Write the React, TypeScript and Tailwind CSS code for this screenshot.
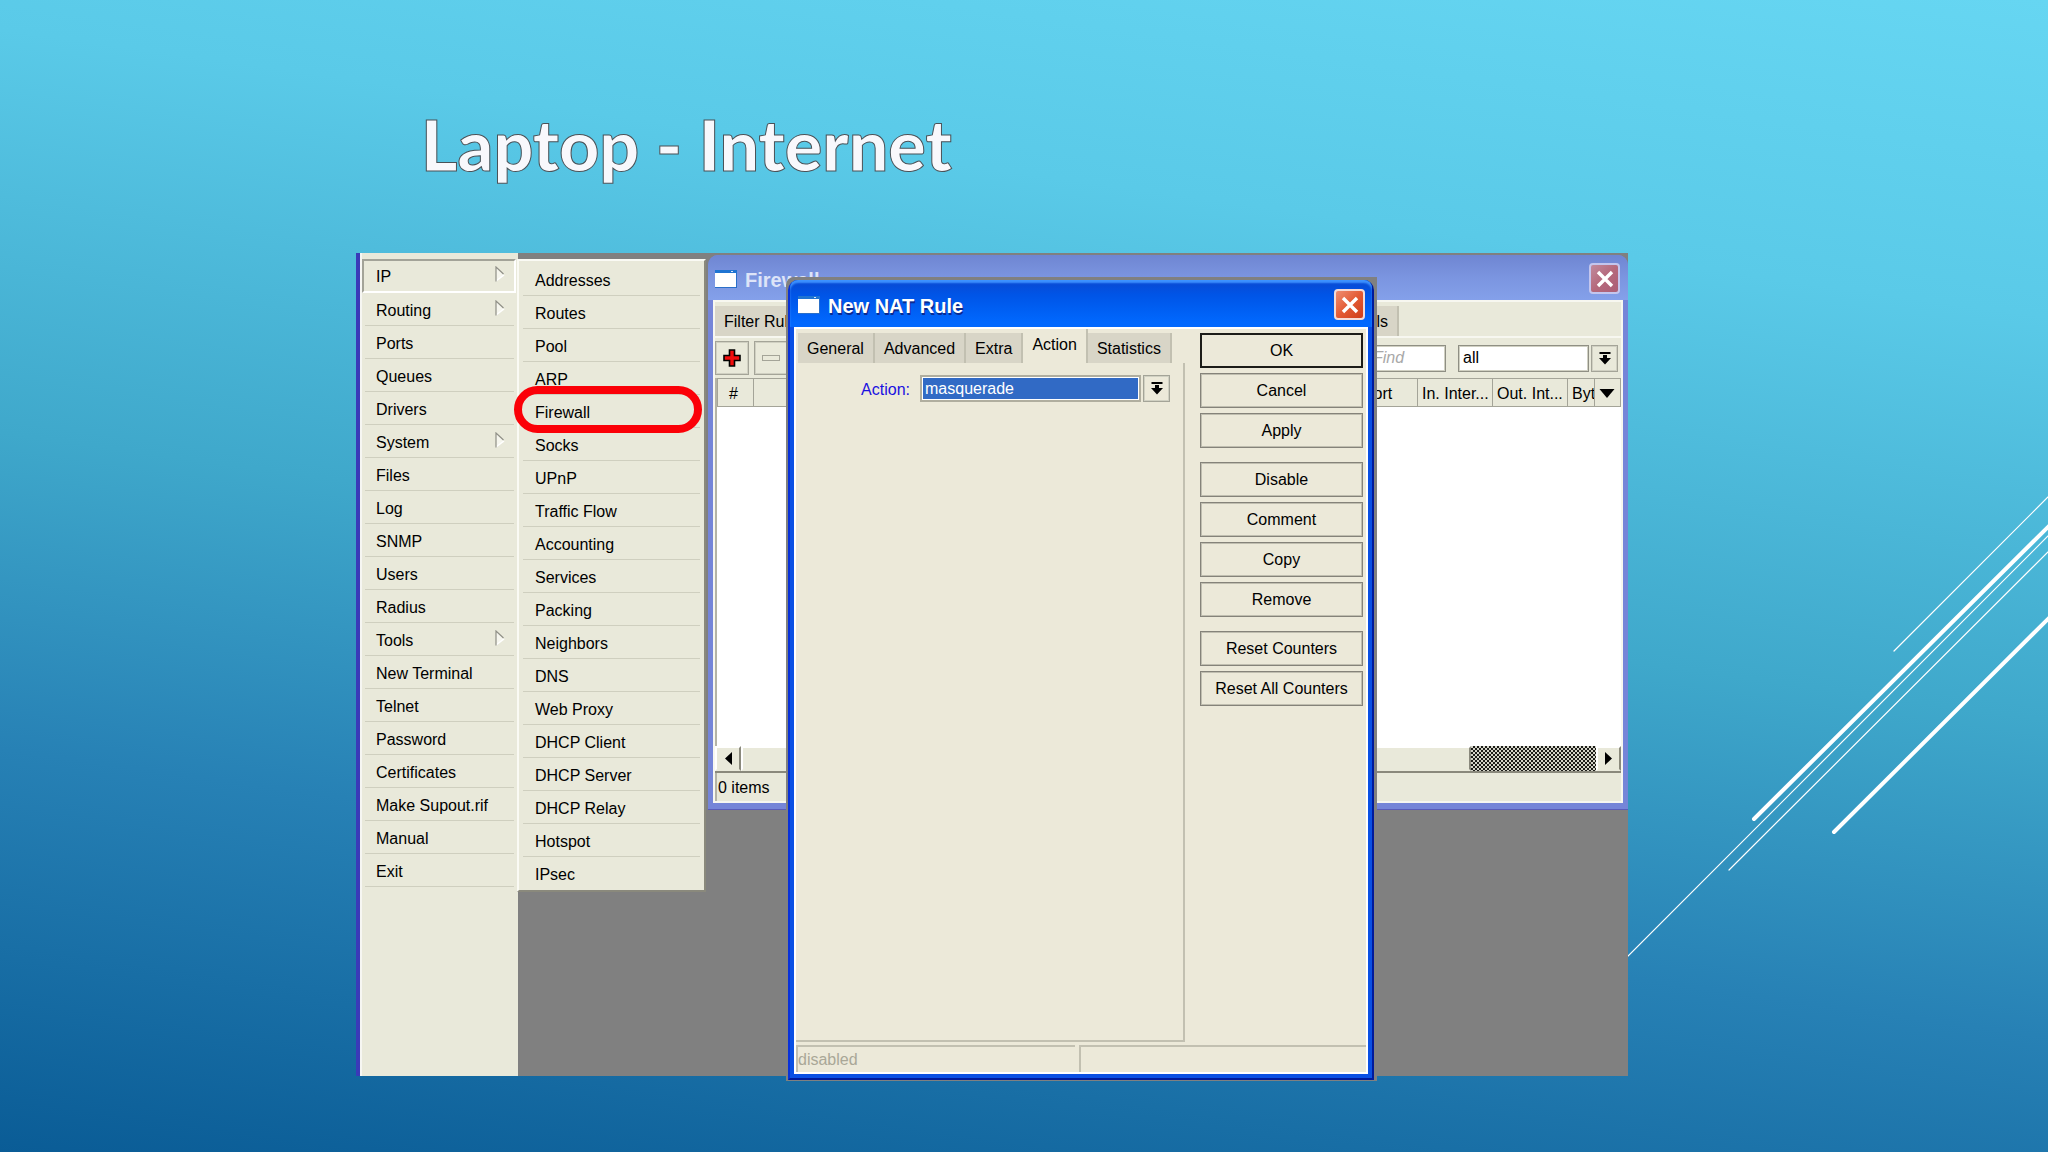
import type { ReactNode } from 'react';

type MenuEntry = { label: string; hasSubmenu?: boolean };

const mainMenu: MenuEntry[] = [
  { label: 'Routing', hasSubmenu: true },
  { label: 'Ports' },
  { label: 'Queues' },
  { label: 'Drivers' },
  { label: 'System', hasSubmenu: true },
  { label: 'Files' },
  { label: 'Log' },
  { label: 'SNMP' },
  { label: 'Users' },
  { label: 'Radius' },
  { label: 'Tools', hasSubmenu: true },
  { label: 'New Terminal' },
  { label: 'Telnet' },
  { label: 'Password' },
  { label: 'Certificates' },
  { label: 'Make Supout.rif' },
  { label: 'Manual' },
  { label: 'Exit' },
];

const ipMenu = [
  'Addresses',
  'Routes',
  'Pool',
  'ARP',
  'Firewall',
  'Socks',
  'UPnP',
  'Traffic Flow',
  'Accounting',
  'Services',
  'Packing',
  'Neighbors',
  'DNS',
  'Web Proxy',
  'DHCP Client',
  'DHCP Server',
  'DHCP Relay',
  'Hotspot',
  'IPsec',
];

const ruleButtons = [
  ['OK', 'Cancel', 'Apply'],
  ['Disable', 'Comment', 'Copy', 'Remove'],
  ['Reset Counters', 'Reset All Counters'],
];

function SubmenuArrow() {
  return (
    <svg width="10" height="16" viewBox="0 0 10 16" className="mb-[6px]">
      <path d="M1 1 L9 9 L1 15 Z" fill="#f6f6ee" />
      <path d="M1 15 L9 9" stroke="#ffffff" strokeWidth="1.5" />
      <path d="M1 15.5 V1 L8.5 8" fill="none" stroke="#8f8f86" strokeWidth="1.2" />
    </svg>
  );
}

function AppIcon() {
  return (
    <svg width="22" height="18" viewBox="0 0 22 18" className="shrink-0">
      <rect width="22" height="18" fill="#2a6fc9" />
      <rect y="2" width="21" height="15" fill="#ffffff" />
      <rect width="22" height="3" fill="#1f74d2" />
      <rect x="16" y="1" width="2" height="1" fill="#d8e6f8" />
    </svg>
  );
}

function DropIcon() {
  return (
    <svg width="12" height="13" viewBox="0 0 12 13">
      <path d="M0.5 0 H11.5 V2 H0.5 Z M4 3 H8 V6 H12 L6 12.5 L0 6 H4 Z" fill="#000" />
    </svg>
  );
}

function CloseButton({ active }: { active?: boolean }) {
  return (
    <button
      aria-label="Close"
      className={
        active
          ? 'flex size-[31px] items-center justify-center rounded-[4px] border-2 border-[#f4dcd8] bg-linear-to-br from-[#ee8d70] via-[#e35a34] to-[#cf3d18]'
          : 'flex size-[31px] items-center justify-center rounded-[4px] border-2 border-[#c3c6ee] bg-linear-to-br from-[#c08a9e] via-[#b5697c] to-[#ab5f78]'
      }
    >
      <svg width="18" height="18" viewBox="0 0 18 18">
        <path d="M2 2 L16 16 M16 2 L2 16" stroke="#fff" strokeWidth="3.4" />
      </svg>
    </button>
  );
}

function Tab({ children }: { children: ReactNode }) {
  return (
    <button
      role="tab"
      className="h-[30px] border-r-2 border-r-[#c2c0b1] bg-[#d8d5c7] px-[9px] pt-px whitespace-nowrap"
    >
      {children}
    </button>
  );
}

function MainMenu() {
  return (
    <nav className="w-[162px] self-stretch border-l-4 border-[#3a3ab8] bg-[#e9e9da]">
      <div className="h-full border-l-2 border-[#f6f6f2] pt-[6px]">
        <button className="flex h-[34px] w-[154px] items-center justify-between border-2 border-t-[#a3a398] border-r-white border-b-white border-l-[#a3a398] pt-[2px] pr-[9px] pl-[12px]">
          IP
          <SubmenuArrow />
        </button>
        {mainMenu.map(({ label, hasSubmenu }) => (
          <button
            key={label}
            className="mx-[3px] flex h-[33px] w-[149px] items-center justify-between border-b border-[#cfcfbf] pt-[3px] pr-[9px] pl-[11px]"
          >
            {label}
            {hasSubmenu && <SubmenuArrow />}
          </button>
        ))}
      </div>
    </nav>
  );
}

function IpMenu() {
  return (
    <nav className="absolute top-[6px] left-[161px] w-[189px] border-2 border-t-[#fafaf4] border-r-[#8a897c] border-b-[#8a897c] border-l-[#fafaf4] bg-[#e9e9da] pt-[2px]">
      {ipMenu.map((label) => (
        <button
          key={label}
          className="mx-[4px] flex h-[33px] w-[177px] items-center border-b border-[#cfcfbf] pt-[3px] pl-[12px] last-of-type:border-transparent"
        >
          {label}
        </button>
      ))}
      <div className="absolute top-[125px] -left-[5px] h-[47px] w-[188px] rounded-full border-[8px] border-[#fb0007]" />
    </nav>
  );
}

function FirewallWindow() {
  return (
    <section className="absolute top-[2px] right-0 left-[352px] flex h-[555px] flex-col rounded-t-[10px] border-b border-[#5a5cb8] bg-[#7585d8] px-[5px] pb-[6px]">
      <header className="-mx-[5px] flex h-[45px] shrink-0 items-center justify-between rounded-t-[10px] bg-linear-to-b from-[#6f86d2] via-[#7b95e0] to-[#84a0ea] pt-[2px] pr-[8px] pl-[7px]">
        <div className="flex items-center gap-2">
          <AppIcon />
          <h2 className="pt-[3px] text-[20px] font-bold text-[#dde4f8]">Firewall</h2>
        </div>
        <CloseButton />
      </header>
      <div className="flex min-h-0 grow flex-col border-2 border-[#f7f7f0] bg-[#e9e9da]">
        <div role="tablist" className="flex w-[684px] shrink-0 justify-between pt-[4px]">
          <Tab>Filter Rules</Tab>
          <Tab>Layer7 Protocols</Tab>
        </div>
        <div className="flex h-[42px] shrink-0 items-center border-t-2 border-[#f7f7f0] pr-[3px]">
          <button
            aria-label="Add"
            className="mr-[5px] flex size-[34px] items-center justify-center border border-[#a4a498] inset-shadow-[0_0_0_1px_#d0d0c2]"
          >
            <svg width="18" height="18" viewBox="0 0 18 18">
              <path
                d="M6.5 1 H11.5 V6.5 H17 V11.5 H11.5 V17 H6.5 V11.5 H1 V6.5 H6.5 Z"
                fill="#f20d0d"
                stroke="#000"
                strokeWidth="1.6"
              />
            </svg>
          </button>
          <button
            aria-label="Remove"
            className="flex size-[34px] items-center justify-center border border-[#a4a498] inset-shadow-[0_0_0_1px_#d0d0c2]"
          >
            <span className="h-[6px] w-[18px] border border-[#a4a498]" />
          </button>
          <input
            aria-label="Find"
            placeholder="Find"
            className="mr-[12px] ml-auto h-[27px] w-[82px] border border-[#8f8f84] bg-white pl-[8px] italic inset-shadow-[0_0_0_1px_#d0d0c2] placeholder:text-[#a8a8a8]"
          />
          <select
            aria-label="Chain"
            className="mr-[2px] h-[27px] w-[131px] appearance-none border border-[#8f8f84] bg-white pl-[4px] inset-shadow-[0_0_0_1px_#d0d0c2]"
          >
            <option>all</option>
          </select>
          <button
            aria-label="Show chains"
            className="flex size-[27px] items-center justify-center border border-[#a4a498] inset-shadow-[0_0_0_1px_#d0d0c2]"
          >
            <DropIcon />
          </button>
        </div>
        <div className="min-h-0 grow border-l-2 border-[#b4b4a6] bg-white">
          <table className="w-full table-fixed border-collapse bg-[#e9e9da]">
            <thead>
              <tr className="h-[28px] text-left [&>th]:overflow-hidden [&>th]:border [&>th]:border-[#a4a498] [&>th]:p-0 [&>th]:pt-[2px] [&>th]:pl-[4px] [&>th]:font-normal [&>th]:whitespace-nowrap">
                <th className="w-[36px]">
                  <span className="pl-[7px]">#</span>
                </th>
                <th />
                <th className="w-[92px]">Dst. Port</th>
                <th className="w-[75px]">In. Inter...</th>
                <th className="w-[75px]">Out. Int...</th>
                <th className="w-[27px]">Byt</th>
                <th className="w-[26px]">
                  <button aria-label="Columns" className="flex">
                    <svg width="16" height="9" viewBox="0 0 16 9">
                      <path d="M0.5 0 H15.5 L8 9 Z" fill="#000" />
                    </svg>
                  </button>
                </th>
              </tr>
            </thead>
          </table>
        </div>
        <div className="flex h-[27px] shrink-0 border-b-2 border-[#8a897c]">
          <button
            aria-label="Scroll left"
            className="flex w-[26px] items-center justify-center border-2 border-t-white border-r-[#8a897c] border-b-transparent border-l-white"
          >
            <svg width="7" height="13" viewBox="0 0 7 13">
              <path d="M7 0 V13 L0 6.5 Z" fill="#000" />
            </svg>
          </button>
          <div className="grow border-2 border-t-white border-r-[#8a897c] border-b-transparent border-l-white" />
          <div className="w-[125px] bg-[repeating-conic-gradient(#1c1c18_0%_25%,#d4d4c8_0%_50%)] bg-size-[4px_4px]" />
          <button
            aria-label="Scroll right"
            className="flex w-[25px] items-center justify-center border-2 border-t-white border-r-[#8a897c] border-b-transparent border-l-white"
          >
            <svg width="7" height="13" viewBox="0 0 7 13">
              <path d="M0 0 V13 L7 6.5 Z" fill="#000" />
            </svg>
          </button>
        </div>
        <footer className="flex h-[28px] shrink-0 items-center border-l-2 border-[#b4b4a6] pt-px pl-px">0 items</footer>
      </div>
    </section>
  );
}

function NatRuleDialog() {
  return (
    <section
      role="dialog"
      aria-label="New NAT Rule"
      className="absolute top-[24px] left-[430px] w-[591px] rounded-tl-[8px] bg-[#808080] pt-[3px] pr-[3px] pb-px pl-[2px]"
    >
      <div className="rounded-t-[10px] border-x-2 border-b-2 border-r-[#001a9c] border-b-[#001a9c] border-l-[#0831d9] bg-[#0a50e4] px-[4px] pb-[4px]">
        <header className="-mx-[4px] flex h-[47px] items-center justify-between rounded-t-[8px] bg-linear-to-b from-[#0a48d0] from-0% via-[#0054e6] via-30% to-[#0168fe] to-90% pt-[2px] pr-[7px] pl-[8px] inset-shadow-[0_3px_2px_#3d92ff]">
          <div className="flex items-center gap-2">
            <AppIcon />
            <h2 className="pt-[3px] text-[20px] font-bold text-white text-shadow-[1px_2px_0_#0a2a90]">New NAT Rule</h2>
          </div>
          <CloseButton active />
        </header>
        <div className="border-2 border-white bg-[#ece9d9]">
          <div className="flex">
            <div className="flex w-[389px] flex-col">
              <div role="tablist" className="flex h-[34px] items-end pl-[2px]">
                <Tab>General</Tab>
                <Tab>Advanced</Tab>
                <Tab>Extra</Tab>
                <button role="tab" aria-selected className="h-[34px] border-r-2 border-[#c2c0b1] px-[9px] pb-[3px]">
                  Action
                </button>
                <Tab>Statistics</Tab>
              </div>
              <div className="flex h-[679px] items-start border-r-2 border-b-2 border-[#c2c0b1] pt-[12px]">
                <label htmlFor="action" className="w-[114px] text-right leading-[29px] text-[#1a10e0]">
                  Action:
                </label>
                <div className="ml-[10px] h-[27px] w-[221px] border-2 border-[#b0ae9f] bg-white p-px">
                  <select
                    id="action"
                    className="block h-[21px] w-full appearance-none bg-[#316ac5] pl-[2px] text-white"
                  >
                    <option>masquerade</option>
                  </select>
                </div>
                <button
                  aria-label="Show actions"
                  className="ml-[2px] flex size-[27px] items-center justify-center border border-[#a4a498] inset-shadow-[0_0_0_1px_#d0d0c2]"
                >
                  <DropIcon />
                </button>
              </div>
            </div>
            <div className="flex grow flex-col gap-[14px] pt-[4px] pr-[3px] pl-[15px]">
              {ruleButtons.map((group) => (
                <div key={group[0]} className="flex flex-col gap-[5px]">
                  {group.map((label) => (
                    <button
                      key={label}
                      className={
                        label === 'OK'
                          ? 'h-[35px] border-2 border-[#1c1c18]'
                          : 'h-[35px] border border-[#85837a] inset-shadow-[0_0_0_1px_#c0beb0]'
                      }
                    >
                      {label}
                    </button>
                  ))}
                </div>
              ))}
            </div>
          </div>
          <footer className="mt-[3px] grid h-[27px] grid-cols-[279px_1fr] gap-[4px] text-[#a9a797]">
            <div className="flex items-center border-t-2 border-l-2 border-[#c2c0b1]">disabled</div>
            <div className="border-t-2 border-l-2 border-[#c2c0b1]" />
          </footer>
        </div>
      </div>
    </section>
  );
}

function SlideLines() {
  return (
    <svg width="420" height="480" viewBox="0 0 420 480" className="absolute top-[480px] right-0">
      <g stroke="#ffffff" strokeLinecap="round">
        <path d="M266 171 L420 17" strokeWidth="1.2" />
        <path d="M126 339 L422 45" strokeWidth="4" />
        <path d="M0 476 L420 56" strokeWidth="1.2" />
        <path d="M101 390 L420 72" strokeWidth="1.2" />
        <path d="M206 352 L422 137" strokeWidth="4" />
      </g>
    </svg>
  );
}

export default function App() {
  return (
    <main className="relative min-h-screen overflow-hidden bg-[linear-gradient(188deg,#66d6f2_0%,#5acae8_22%,#3fa8cb_50%,#2781b5_72%,#0a5c96_100%)] pr-[420px] pb-[76px] pl-[356px] font-['Liberation_Sans',sans-serif] text-[16px] leading-[20px] text-black">
      <SlideLines />
      <h1 className="flex h-[253px] items-center pt-[34px] pl-[65px] font-['Lato',sans-serif] text-[70px] leading-[80px] font-black text-[#f8f8fc] [-webkit-text-stroke:1px_#4a5258]">
        Laptop - Internet
      </h1>
      <div className="relative flex min-h-[823px] bg-[#808080]">
        <MainMenu />
        <FirewallWindow />
        <IpMenu />
        <NatRuleDialog />
      </div>
    </main>
  );
}
